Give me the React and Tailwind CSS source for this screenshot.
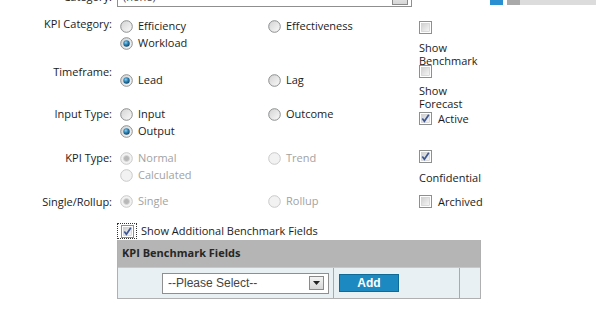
import React from "react";

const F = { fontFamily: '"Open Sans", "DejaVu Sans", sans-serif' };

function Radio({ checked, disabled }) {
  const stroke = disabled ? "#c9c9c9" : "#8c8e8f";
  return (
    <svg width="13" height="13" viewBox="0 0 13 13" className="shrink-0">
      <defs>
        <linearGradient id="rg" x1="0" y1="0" x2="1" y2="1">
          <stop offset="0" stopColor="#d2d2d2" />
          <stop offset="1" stopColor="#fbfbfb" />
        </linearGradient>
        <radialGradient id="rd" cx="0.4" cy="0.35" r="0.7">
          <stop offset="0" stopColor="#8fd0f2" />
          <stop offset="0.5" stopColor="#2a7fb0" />
          <stop offset="1" stopColor="#0e3f62" />
        </radialGradient>
      </defs>
      <circle cx="6.5" cy="6.5" r="5.8" fill={disabled ? "#f2f2f2" : "url(#rg)"} stroke={stroke} strokeWidth="1" />
      {checked && !disabled && <circle cx="6.5" cy="6.5" r="3.2" fill="url(#rd)" />}
      {checked && disabled && <circle cx="6.5" cy="6.5" r="3" fill="#b8b8b8" stroke="#d6d6d6" strokeWidth="0.8" />}
    </svg>
  );
}

function Check({ checked }) {
  return (
    <svg width="13" height="13" viewBox="0 0 13 13" className="shrink-0">
      <defs>
        <linearGradient id="cg" x1="0" y1="0" x2="1" y2="1">
          <stop offset="0" stopColor="#cfcfcf" />
          <stop offset="1" stopColor="#f7f7f7" />
        </linearGradient>
      </defs>
      <rect x="0.5" y="0.5" width="12" height="12" fill="#fff" stroke="#8e8f8f" />
      <rect x="2.5" y="2.5" width="8" height="8" fill="url(#cg)" stroke="#c8c8c8" strokeWidth="0.6" />
      {checked && (
        <path d="M3.3 6.6 L5.4 9.3 L9.8 2.8" fill="none" stroke="#3d5796" strokeWidth="1.7" />
      )}
    </svg>
  );
}

function Opt({ label, checked, disabled }) {
  return (
    <div className="flex h-[17px] items-center gap-[5px]">
      <Radio checked={checked} disabled={disabled} />
      <span className={disabled ? "text-[#a2a2a2]" : "text-[#1b1b1b]"}>{label}</span>
    </div>
  );
}

function Label({ children, pt = "pt-0" }) {
  return (
    <div className={`w-[112px] shrink-0 text-right leading-[13px] text-[#1b1b1b] ${pt}`}>
      {children}
    </div>
  );
}

function Arrow({ className }) {
  return (
    <div className={`flex items-center justify-center border border-[#8a8a8a] bg-gradient-to-b from-[#f4f4f4] to-[#d6d6d6] ${className}`}>
      <svg width="7" height="4" viewBox="0 0 7 4">
        <path d="M0 0 H7 L3.5 4 Z" fill="#222" />
      </svg>
    </div>
  );
}

export default function App() {
  return (
    <div className="relative h-[323px] w-[596px] overflow-hidden bg-white text-[11px]" style={F}>
      {/* top right strip */}
      <div className="absolute right-0 top-0 flex h-[5px]">
        <div className="w-[13px] bg-[#2a8fd0]" />
        <div className="ml-[4px] w-[13px] bg-[#a9a9a9]" />
        <div className="w-[76px] bg-[#dcdcdc]" />
      </div>

      {/* row 0: partial select */}
      <div className="-mt-[13px] flex h-[20px]">
        <div className="w-[112px] shrink-0 pt-[3px] text-right leading-[13px] text-[#1b1b1b]">Category:</div>
        <div className="ml-[5px] flex h-[20px] w-[295px] items-center justify-between border border-[#8f8f8f] pl-[5px] pr-[3px] text-[#444]">
          <span>(none)</span>
          <Arrow className="h-[15px] w-[16px]" />
        </div>
      </div>

      <div className="mt-[10px] flex flex-col">
        {/* Row 1 */}
        <div className="flex h-[48px] items-start">
          <Label>KPI Category:</Label>
          <div className="ml-[8px] w-[148px] pt-[1px]">
            <Opt label="Efficiency" />
            <Opt label="Workload" checked />
          </div>
          <div className="w-[151px] pt-[1px]">
            <Opt label="Effectiveness" />
          </div>
          <div className="pt-[4px] leading-[13px] text-[#1b1b1b]">
            <Check />
            <div className="mt-[7px]">Show<br />Benchmark</div>
          </div>
        </div>

        {/* Row 2 */}
        <div className="flex h-[42px] items-start">
          <Label>Timeframe:</Label>
          <div className="ml-[8px] w-[148px] pt-[7px]">
            <Opt label="Lead" checked />
          </div>
          <div className="w-[151px] pt-[7px]">
            <Opt label="Lag" />
          </div>
          <div className="leading-[13px] text-[#1b1b1b]">
            <Check />
            <div className="mt-[6px]">Show<br />Forecast</div>
          </div>
        </div>

        {/* Row 3 */}
        <div className="flex h-[43px] items-start">
          <Label>Input Type:</Label>
          <div className="ml-[8px] w-[148px]">
            <div className="-mt-[1px]">
              <Opt label="Input" />
              <Opt label="Output" checked />
            </div>
          </div>
          <div className="w-[151px]">
            <div className="-mt-[1px]"><Opt label="Outcome" /></div>
          </div>
          <div className="mt-[5px] flex h-[13px] items-center gap-[6px] leading-[13px] text-[#1b1b1b]">
            <Check checked />
            <span>Active</span>
          </div>
        </div>

        {/* Row 4 */}
        <div className="flex h-[45px] items-start">
          <Label pt="pt-px">KPI Type:</Label>
          <div className="ml-[8px] w-[148px]">
            <Opt label="Normal" checked disabled />
            <Opt label="Calculated" disabled />
          </div>
          <div className="w-[151px]">
            <Opt label="Trend" disabled />
          </div>
          <div className="leading-[13px] text-[#1b1b1b]">
            <Check checked />
            <div className="mt-[8px]">Confidential</div>
          </div>
        </div>

        {/* Row 5 */}
        <div className="flex h-[27px] items-start">
          <Label>Single/Rollup:</Label>
          <div className="ml-[8px] w-[148px]">
            <div className="-mt-[2px]"><Opt label="Single" checked disabled /></div>
          </div>
          <div className="w-[151px]">
            <div className="-mt-[2px]"><Opt label="Rollup" disabled /></div>
          </div>
          <div className="flex h-[13px] items-center gap-[6px] leading-[13px] text-[#1b1b1b]">
            <Check />
            <span>Archived</span>
          </div>
        </div>

        {/* Row 6 */}
        <div className="ml-[117px] flex h-[18px] items-center">
          <div className="flex h-[16px] w-[20px] items-center justify-center outline-1 outline-dotted outline-[#333] -outline-offset-1">
            <Check checked />
          </div>
          <span className="ml-[4px] text-[#1b1b1b]">Show Additional Benchmark Fields</span>
        </div>

        {/* Table */}
        <div className="ml-[117px] w-[364px] border-x border-b border-[#b0b0b0]">
          <div className="flex h-[27px] items-center bg-[#b5b5b5] pl-[4px] font-bold text-[#262626]">
            KPI Benchmark Fields
          </div>
          <div className="flex h-[31px] border-t border-[#c8c8c8] bg-[#e9f0f3]">
            <div className="flex w-[216px] items-center justify-end border-r border-[#aaaaaa] pr-[4px]">
              <div className="flex h-[21px] w-[167px] items-center justify-between border border-[#8f8f8f] bg-white pl-[5px] pr-[4px] text-[12px] text-[#444]" style={{ fontFamily: '"Liberation Sans", Arial, sans-serif' }}>
                <span>--Please Select--</span>
                <Arrow className="h-[14px] w-[15px]" />
              </div>
            </div>
            <div className="flex w-[126px] items-center border-r border-[#aaaaaa] pl-[5px]">
              <div className="flex h-[18px] w-[60px] items-center justify-center border border-[#0f6a97] bg-[#1c89c0] text-[12px] font-bold text-white" style={{ fontFamily: '"Liberation Sans", Arial, sans-serif' }}>
                Add
              </div>
            </div>
            <div className="flex-1" />
          </div>
        </div>
      </div>
    </div>
  );
}
